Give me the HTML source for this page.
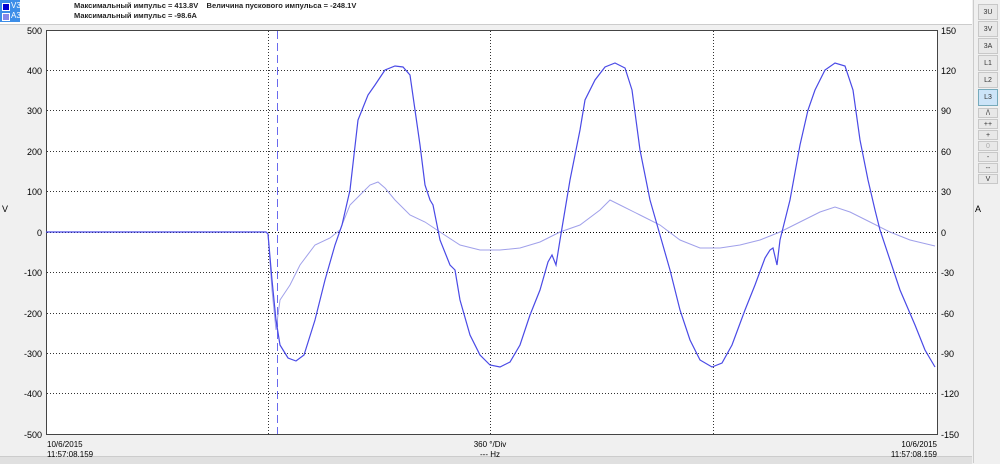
<!DOCTYPE html>
<html><head><meta charset="utf-8"><style>
body{margin:0;width:1000px;height:463px;background:#f0f0f0;position:relative;overflow:hidden;font-family:"Liberation Sans",sans-serif;font-size:9px;color:#000}
.t{position:absolute;white-space:nowrap}
.btn{position:absolute;left:978px;width:20px;background:#e8e8e8;border:1px solid #c8c8c8;box-sizing:border-box;font-size:7px;text-align:center;color:#333}
</style></head><body>
<div style="position:absolute;left:0;top:0;width:972px;height:24px;background:#fff;border-bottom:1px solid #ccc"></div>
<div style="position:absolute;left:0;top:0;width:20px;height:22px;background:#3d8ee8"></div>
<div style="position:absolute;left:2px;top:3px;width:6px;height:6px;background:#0000d0;border:1px solid #fff"></div>
<div style="position:absolute;left:2px;top:13px;width:6px;height:6px;background:#8888e8;border:1px solid #fff"></div>
<div class="t" style="left:11px;top:1px;color:#fff;font-size:8px">V3</div>
<div class="t" style="left:11px;top:11px;color:#fff;font-size:8px">A3</div>
<div class="t" style="left:74px;top:1px;font-size:7.5px;font-weight:bold;color:#222">Максимальный импульс = 413.8V &nbsp;&nbsp;&nbsp;Величина пускового импульса = -248.1V</div>
<div class="t" style="left:74px;top:11px;font-size:7.5px;font-weight:bold;color:#222">Максимальный импульс = -98.6A</div>
<div style="position:absolute;left:973px;top:0;width:1px;height:463px;background:#ccc"></div>
<div class="btn" style="top:4px;height:16px;line-height:15px">3U</div>
<div class="btn" style="top:21px;height:16px;line-height:15px">3V</div>
<div class="btn" style="top:38px;height:16px;line-height:15px">3A</div>
<div class="btn" style="top:55px;height:16px;line-height:15px">L1</div>
<div class="btn" style="top:72px;height:16px;line-height:15px">L2</div>
<div class="btn" style="top:89px;height:17px;line-height:16px;background:#cce4f8;border-color:#7ab">L3</div>
<div class="btn" style="top:108px;height:10px;line-height:9px">/\</div>
<div class="btn" style="top:119px;height:10px;line-height:9px">++</div>
<div class="btn" style="top:130px;height:10px;line-height:9px">+</div>
<div class="btn" style="top:141px;height:10px;line-height:9px;color:#aaa">0</div>
<div class="btn" style="top:152px;height:10px;line-height:9px">-</div>
<div class="btn" style="top:163px;height:10px;line-height:9px">--</div>
<div class="btn" style="top:174px;height:10px;line-height:9px">V</div>
<div style="position:absolute;left:0;top:456px;width:972px;height:7px;background:#e0e0e0;border-top:1px solid #ccc"></div>
<svg style="position:absolute;left:0;top:0" width="1000" height="463">
<rect x="46.5" y="30.5" width="891" height="404" fill="#fff" stroke="#444"/>
<g stroke="#333" stroke-dasharray="1,2" stroke-width="1">
<line x1="47" x2="937" y1="70.5" y2="70.5"/><line x1="47" x2="937" y1="110.5" y2="110.5"/><line x1="47" x2="937" y1="151.5" y2="151.5"/><line x1="47" x2="937" y1="191.5" y2="191.5"/><line x1="47" x2="937" y1="232.5" y2="232.5" stroke="#000"/><line x1="47" x2="937" y1="272.5" y2="272.5"/><line x1="47" x2="937" y1="313.5" y2="313.5"/><line x1="47" x2="937" y1="353.5" y2="353.5"/><line x1="47" x2="937" y1="393.5" y2="393.5"/>
<line x1="268.5" x2="268.5" y1="31" y2="434"/><line x1="490.5" x2="490.5" y1="31" y2="434"/><line x1="713.5" x2="713.5" y1="31" y2="434"/>
</g>
<line x1="277.5" x2="277.5" y1="31" y2="434" stroke="#6a6aee" stroke-dasharray="8,4"/>
<polyline fill="none" stroke="#a0a0ea" stroke-width="1" points="46,232 266,232 268,234 272,290 276,330 280,300 290,285 300,265 315,245 330,238 340,230 350,205 360,195 370,185 378,182 385,188 395,200 410,215 425,222 440,232 460,245 480,250 500,250 520,248 540,242 560,232 580,225 600,210 610,200 620,205 640,215 660,225 680,240 700,248 720,248 740,245 760,240 780,232 800,222 820,212 835,207 850,212 870,222 890,232 910,240 935,246"/>
<polyline fill="none" stroke="#4a4ae6" stroke-width="1.2" points="46,232 266,232 268,234 272,280 276,320 280,345 288,358 296,361 304,355 315,320 325,280 335,245 342,225 350,190 358,120 368,95 375,85 385,70 395,66 403,67 410,75 415,110 420,145 425,185 430,200 433,205 440,240 450,265 455,270 460,300 470,335 480,355 490,365 500,367 510,362 520,345 530,315 540,290 548,262 552,255 556,265 560,240 570,180 580,130 585,100 595,80 605,67 615,63 625,68 632,90 640,150 650,200 660,235 670,270 680,310 690,340 700,360 712,367 722,363 732,345 745,310 755,285 765,258 770,250 773,248 777,265 780,240 790,200 800,145 808,110 815,90 825,70 835,63 845,66 853,90 860,140 868,180 875,210 880,230 890,260 900,290 915,325 925,350 935,367"/>
<g font-family="Liberation Sans" font-size="9" fill="#000" text-anchor="end">
<text x="42" y="34">500</text><text x="42" y="74">400</text><text x="42" y="114">300</text><text x="42" y="155">200</text><text x="42" y="195">100</text><text x="42" y="236">0</text><text x="42" y="276">-100</text><text x="42" y="317">-200</text><text x="42" y="357">-300</text><text x="42" y="397">-400</text><text x="42" y="438">-500</text>
</g>
<g font-family="Liberation Sans" font-size="9" fill="#000">
<text x="941" y="34">150</text><text x="941" y="74">120</text><text x="941" y="114">90</text><text x="941" y="155">60</text><text x="941" y="195">30</text><text x="941" y="236">0</text><text x="941" y="276">-30</text><text x="941" y="317">-60</text><text x="941" y="357">-90</text><text x="941" y="397">-120</text><text x="941" y="438">-150</text>
<text x="2" y="212">V</text><text x="975" y="212">A</text>
<text x="47" y="447" font-size="8">10/6/2015</text><text x="47" y="457" font-size="8">11:57:08.159</text>
<text x="937" y="447" font-size="8" text-anchor="end">10/6/2015</text><text x="937" y="457" font-size="8" text-anchor="end">11:57:08.159</text>
<text x="490" y="447" font-size="8" text-anchor="middle">360 °/Div</text><text x="490" y="457" font-size="8" text-anchor="middle">--- Hz</text>
</g>
</svg>
</body></html>
